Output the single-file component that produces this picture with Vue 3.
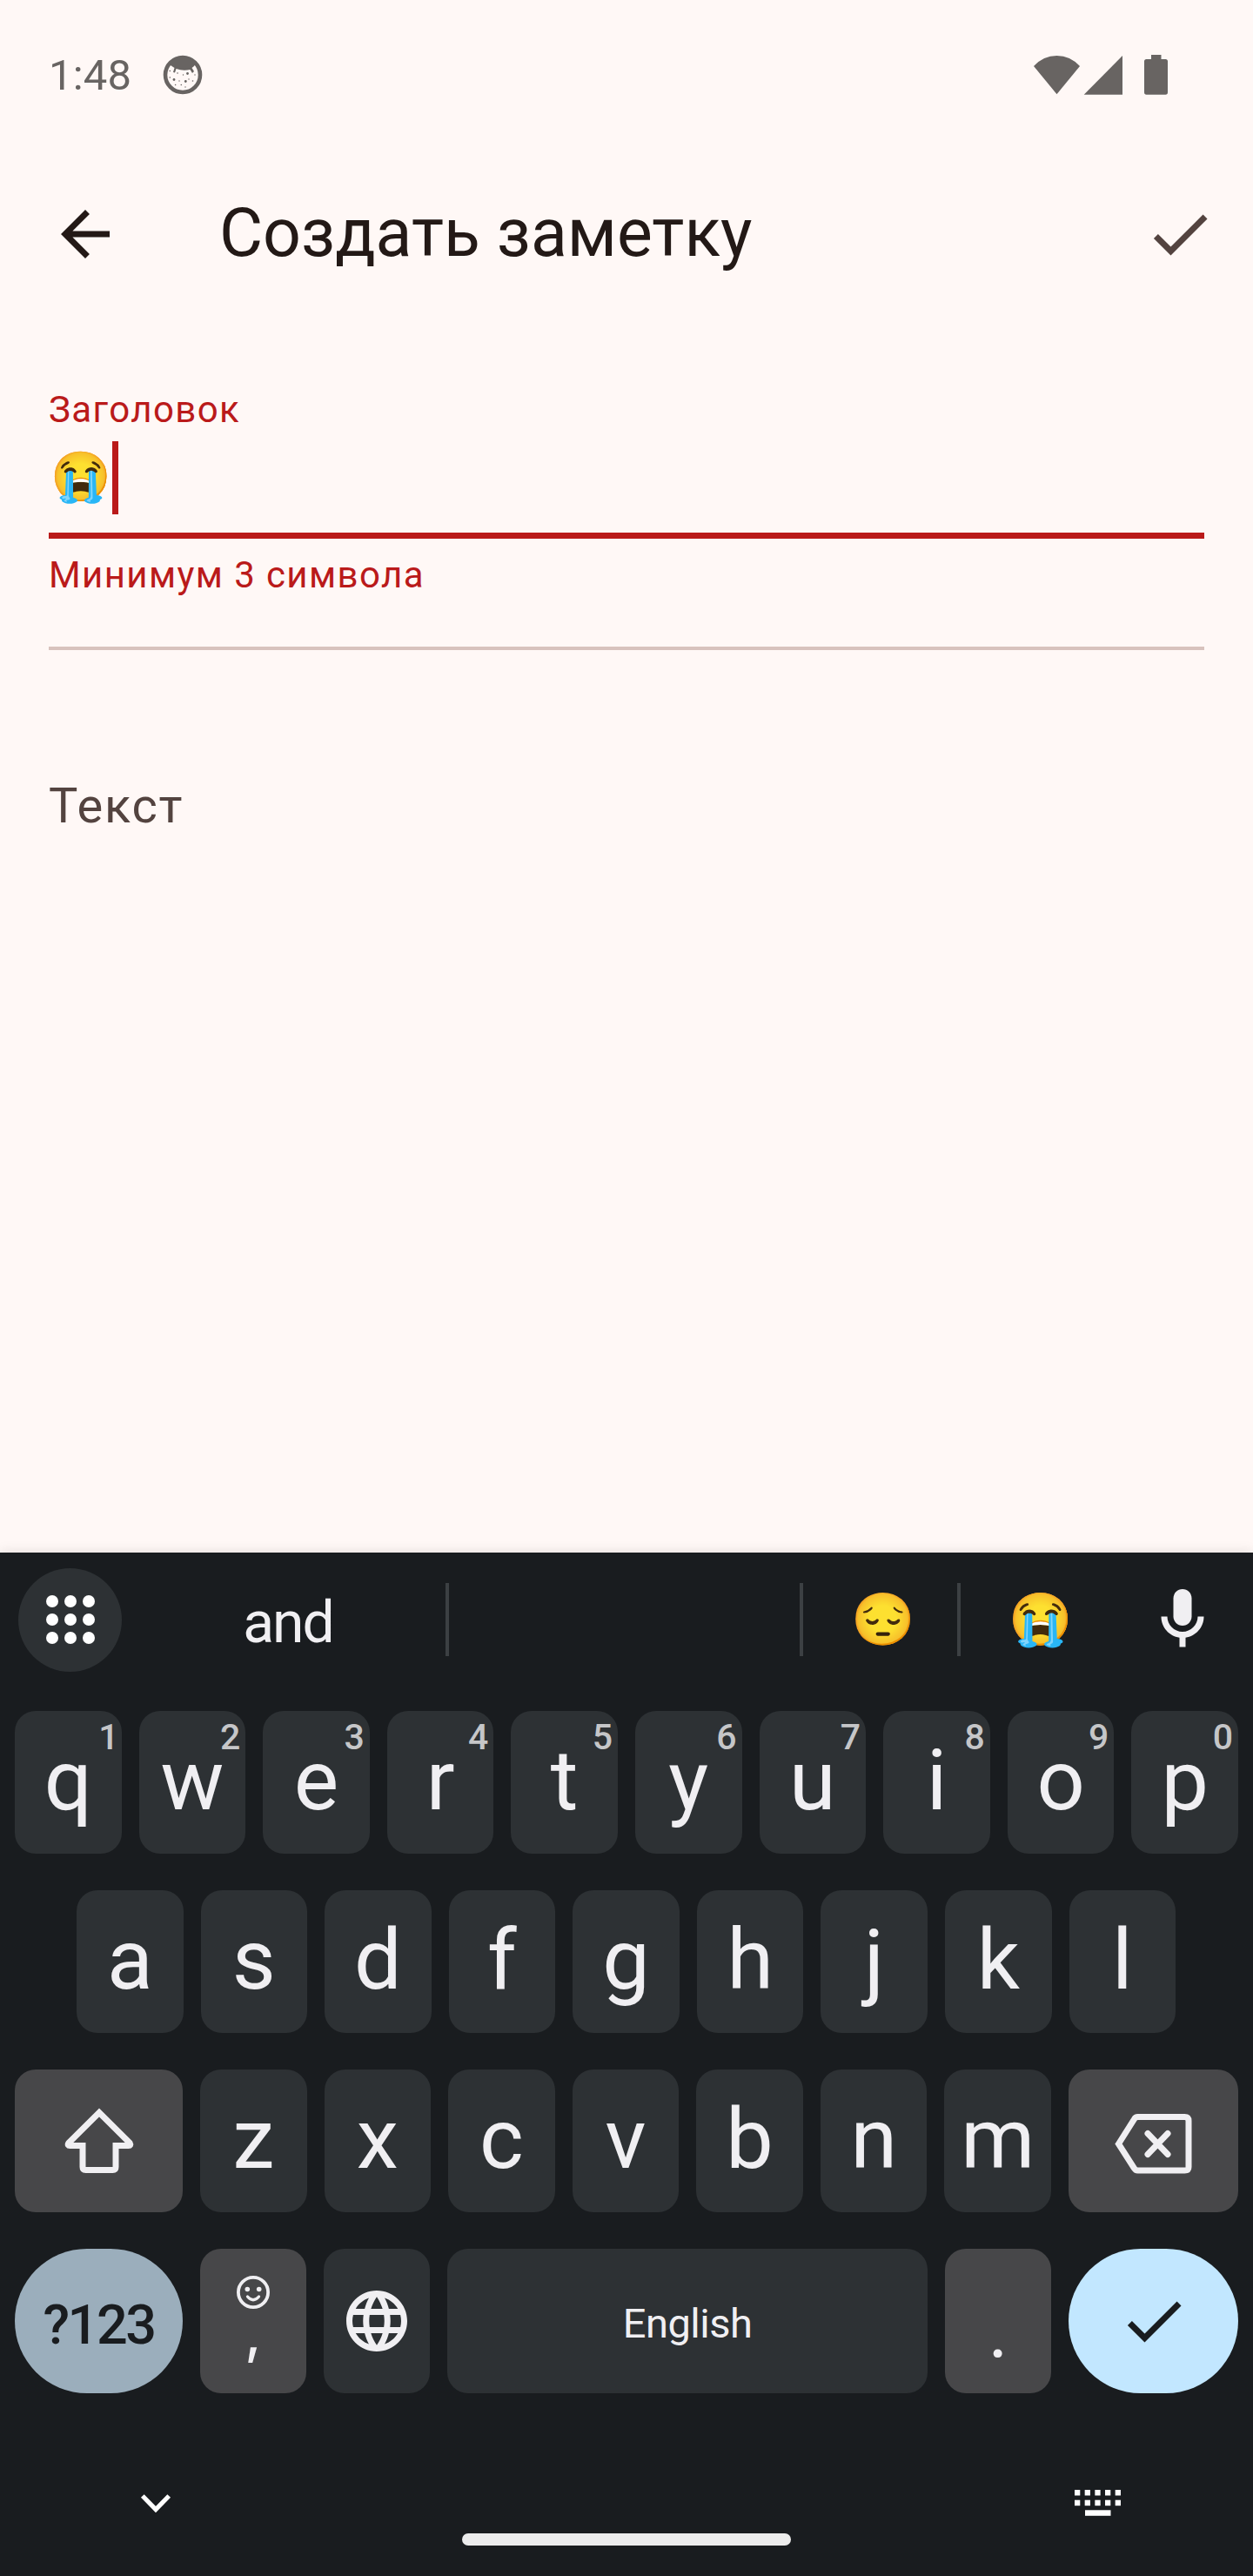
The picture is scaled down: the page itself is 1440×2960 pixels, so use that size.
<script setup>
const rowOne = [...'qwertyuiop'].map((letter, i) => ({ letter, hint: String((i + 1) % 10) }))
const rowTwo = [...'asdfghjkl']
const rowThree = [...'zxcvbnm']
const columns = [0, 1, 2, 3, 4]
const dots = [0, 1, 2, 3, 4, 5, 6, 7, 8]
</script>

<template>
  <div class="screen">
    <header class="status">
      <span class="clock">1:48</span>
      <svg class="avatar" width="46" height="46" viewBox="0 0 46 46">
        <circle cx="23" cy="23" r="20" fill="none" stroke="#686462" stroke-width="4.6" />
        <path d="M8 10Q23 -5 38 10L36 13L33.500 15L36 19L34 21L31.500 17Q23 19 15.500 16L14 20.500L12 20L13.500 15L9 12Z" fill="#686462" />
        <g fill="#686462">
          <circle cx="13" cy="28.500" r="1.400" /><circle cx="28.500" cy="21.500" r="1.400" />
          <circle cx="26.300" cy="30.500" r="1.400" /><circle cx="8.300" cy="18.500" r=".8" />
          <circle cx="8.300" cy="26" r=".8" /><circle cx="17" cy="21" r=".8" />
          <circle cx="23.500" cy="23" r=".7" /><circle cx="19" cy="30" r=".7" />
          <circle cx="14.600" cy="34.500" r=".8" /><circle cx="21.300" cy="34.500" r=".8" />
          <circle cx="26" cy="37" r=".7" /><circle cx="30" cy="28" r=".7" />
          <circle cx="34.500" cy="30" r=".8" /><circle cx="37" cy="23" r=".7" />
        </g>
      </svg>
      <svg class="signals" width="156" height="46" viewBox="0 0 156 46" fill="#686462">
        <path d="M0 13Q11 1 26.500 1T53 13L26.500 45.300Z" />
        <path d="M57.700 45.700L102 1V45.700Z" />
        <path d="M135 0H146.500V5H151.500Q154 5 154 7.500V43Q154 45.700 151.500 45.700H129.500Q127 45.700 127 43V7.500Q127 5 129.500 5H135Z" />
      </svg>
    </header>

    <nav class="appbar">
      <svg width="84" height="84" viewBox="0 0 24 24" fill="#231916"><path d="M20 11H7.830l5.590-5.590L12 4l-8 8 8 8 1.410-1.410L7.830 13H20v-2z" /></svg>
      <h1>Создать заметку</h1>
      <svg width="84" height="84" viewBox="0 0 24 24" fill="#53433f"><path d="M9 16.170L4.830 12l-1.420 1.410L9 19 21 7l-1.410-1.410z" /></svg>
    </nav>

    <main class="form">
      <label class="small">Заголовок</label>
      <div class="entry"><span class="typed">😭</span><i class="caret"></i></div>
      <p class="small error">Минимум 3 символа</p>
      <hr />
      <div class="placeholder">Текст</div>
    </main>

    <section class="keyboard">
      <div class="suggestions">
        <span class="apps"><i v-for="d in dots" :key="d"></i></span>
        <span class="word">and</span>
        <i class="bar"></i>
        <span class="blank"></span>
        <i class="bar"></i>
        <span class="emoji">😔</span>
        <i class="bar"></i>
        <span class="emoji">😭</span>
        <svg class="mic" width="84" height="84" viewBox="0 0 24 24" fill="#f0eff2"><path d="M12 14c1.660 0 3-1.340 3-3V5c0-1.660-1.340-3-3-3S9 3.340 9 5v6c0 1.660 1.340 3 3 3z" /><path d="M17 11c0 2.760-2.240 5-5 5s-5-2.240-5-5H5c0 3.530 2.610 6.430 6 6.920V21h2v-3.080c3.390-.49 6-3.390 6-6.920h-2z" /></svg>
      </div>

      <div class="row">
        <div v-for="k in rowOne" :key="k.letter" class="key"><b>{{ k.letter }}</b><sup>{{ k.hint }}</sup></div>
      </div>
      <div class="row inset">
        <div v-for="k in rowTwo" :key="k" class="key"><b>{{ k }}</b></div>
      </div>
      <div class="row">
        <div class="key wide grey">
          <svg width="84" height="84" viewBox="0 0 84 84" fill="none" stroke="#f0eff2" stroke-width="7">
            <path d="M42 9.500L6.800 44.500Q5 47.500 8.500 47.500H23V72Q23 75.500 26.500 75.500H57.500Q61 75.500 61 72V47.500H75.500Q79 47.500 77.200 44.500Z" />
          </svg>
        </div>
        <div v-for="k in rowThree" :key="k" class="key"><b>{{ k }}</b></div>
        <div class="key wide grey">
          <svg width="96" height="84" viewBox="0 0 96 84" fill="none" stroke="#f0eff2" stroke-width="7">
            <path d="M7.500 45.500L25.500 17Q27 14.500 29.500 14.500H83.500Q88 14.500 88 19V72Q88 76 83.500 76H29.500Q27 76 25.500 73.500Z" />
            <path d="M41 33.500L64 57.500M64 33.500L41 57.500" stroke-linecap="round" />
          </svg>
        </div>
      </div>
      <div class="row last">
        <div class="key wide symbols">?123</div>
        <div class="key grey comma">
          <svg width="38" height="38" viewBox="0 0 38 38" fill="none" stroke="#f0eff2" stroke-width="3.800">
            <circle cx="19" cy="19" r="17.100" />
            <path d="M12.500 24Q19 31.500 25.500 24" stroke-linecap="round" stroke-width="3.300" />
            <g fill="#f0eff2" stroke="none"><circle cx="12.300" cy="15.500" r="2.800" /><circle cx="25.700" cy="15.500" r="2.800" /></g>
          </svg>
          <span>,</span>
        </div>
        <div class="key">
          <svg width="84" height="84" viewBox="0 0 24 24" fill="#f0eff2"><path d="M11.990 2C6.470 2 2 6.480 2 12s4.470 10 9.990 10C17.520 22 22 17.520 22 12S17.520 2 11.990 2zm6.930 6h-2.950c-.32-1.250-.78-2.450-1.380-3.560 1.840.63 3.370 1.910 4.330 3.560zM12 4.040c.83 1.200 1.480 2.530 1.910 3.960h-3.820c.43-1.430 1.080-2.760 1.910-3.960zM4.260 14C4.100 13.360 4 12.690 4 12s.1-1.360.26-2h3.380c-.08.66-.14 1.320-.14 2 0 .68.06 1.340.14 2H4.260zm.82 2h2.950c.32 1.250.78 2.450 1.380 3.560-1.840-.63-3.370-1.900-4.330-3.560zm2.950-8H5.080c.96-1.660 2.490-2.930 4.330-3.560C8.810 5.550 8.350 6.750 8.030 8zM12 19.960c-.83-1.200-1.480-2.530-1.910-3.960h3.820c-.43 1.430-1.080 2.760-1.910 3.960zM14.340 14H9.660c-.09-.66-.16-1.320-.16-2 0-.68.07-1.350.16-2h4.680c.09.65.16 1.320.16 2 0 .68-.07 1.340-.16 2zm.25 5.560c.6-1.110 1.060-2.310 1.380-3.560h2.950c-.96 1.650-2.490 2.930-4.330 3.560zM16.360 14c.08-.66.14-1.320.14-2 0-.68-.06-1.340-.14-2h3.380c.16.64.26 1.310.26 2s-.1 1.360-.26 2h-3.380z" /></svg>
        </div>
        <div class="key space">English</div>
        <div class="key grey period"><span>.</span></div>
        <div class="key wide enter">
          <svg width="84" height="84" viewBox="0 0 24 24" fill="#191c1f"><path d="M9 16.170L4.830 12l-1.420 1.410L9 19 21 7l-1.410-1.410z" /></svg>
        </div>
      </div>

      <footer class="system">
        <svg class="hide" width="36" height="26" viewBox="0 0 36 26" fill="none" stroke="#fff" stroke-width="5.200"><path d="M2.800 4L18 19.500L33.200 4" /></svg>
        <span class="handle"></span>
        <svg class="switcher" width="54" height="32" viewBox="0 0 54 32" fill="#fff">
          <g v-for="c in columns" :key="c">
            <rect :x="c * 11.67" y="0" width="6.300" height="6.500" />
            <rect :x="c * 11.67" y="11.700" width="6.300" height="6.500" />
          </g>
          <rect x="12" y="23.300" width="29.500" height="6.500" />
        </svg>
      </footer>
    </section>
  </div>
</template>

<style>
body { margin: 0; background: #fff8f6; }
</style>

<style scoped>
* { box-sizing: border-box; }
.screen { width: 1440px; height: 2960px; display: flex; flex-direction: column; background: #fff8f6; font-family: Roboto, sans-serif; overflow: hidden; }
.screen svg { display: block; flex: none; }
.status { height: 171px; padding: 0 96px 0 56px; display: flex; align-items: center; }
.clock { width: 131px; padding-top: 3px; font-size: 49px; line-height: 60px; letter-spacing: .2px; color: #686462; }
.signals { margin-left: auto; }
.appbar { height: 196px; padding: 0 42px 0 56px; display: flex; align-items: center; }
.appbar h1 { flex: 1; margin: 0 0 0 112px; padding-bottom: 2px; font-size: 77px; line-height: 92px; font-weight: 400; color: #231916; }
.form { flex: 1; padding: 76px 56px 0; display: flex; flex-direction: column; }
.small { margin: 0; font-size: 42px; line-height: 56px; letter-spacing: 1.400px; color: #ba1a1a; }
.entry { height: 120px; padding-bottom: 21px; display: flex; align-items: flex-end; border-bottom: 7px solid #ba1a1a; }
.typed { width: 73px; padding: 0 0 1px 2px; font-size: 56px; line-height: 84px; }
.caret { width: 7px; height: 84px; background: #ba1a1a; }
.error { margin-top: 14px; }
hr { width: 100%; height: 4px; margin: 54px 0 0; border: 0; background: #d8c2bd; }
.placeholder { margin-top: 137px; font-size: 56px; line-height: 84px; letter-spacing: 1.750px; color: #53433f; }
.keyboard { height: 1176px; flex: none; background: #191c1f; color: #f0eff2; box-shadow: 0 0 14px rgba(0, 0, 0, .12); }
.suggestions { height: 154px; margin-bottom: 28px; padding-left: 21px; display: flex; align-items: center; }
.apps { width: 119px; height: 119px; padding: 32px; border-radius: 50%; background: #2d3134; display: grid; grid-template-columns: repeat(3, 14px); grid-auto-rows: 14px; gap: 7px; align-content: center; justify-content: center; }
.apps i { border-radius: 50%; background: #fff; }
.word { width: 372px; padding: 8px 0 0 10px; text-align: center; font-size: 66px; line-height: 80px; letter-spacing: -2px; }
.bar { width: 4px; height: 84px; background: #3c4043; }
.blank { width: 403px; }
.emoji { width: 177px; padding: 0 0 1px 5px; text-align: center; font-size: 59px; line-height: 80px; }
.mic { margin-left: 36px; }
.row { height: 164px; margin-bottom: 42px; padding: 0 17px; display: flex; gap: 20px; }
.inset { padding: 0 89px 0 88px; }
.key { flex: 1 1 0; position: relative; display: flex; align-items: center; justify-content: center; border-radius: 24px; background: #2d3134; }
.key b { font-size: 97px; line-height: 112px; font-weight: 400; padding-bottom: 4px; }
.key sup { position: absolute; top: 6px; right: 6px; font-size: 41px; line-height: 48px; font-weight: 500; color: #c5c6c8; }
.row .key:first-child sup { right: 3px; }
.wide { flex: 0 0 193px; }
.wide:last-child { flex-basis: 195px; }
.grey { background: #474749; }
.last { height: 166px; margin-bottom: 0; }
.symbols { border-radius: 83px; background: #9baebc; color: #191c1f; font-size: 63px; font-weight: 500; letter-spacing: -2.500px; padding-top: 8px; }
.comma { flex-direction: column; justify-content: flex-start; padding-top: 31px; }
.comma span { font: 500 62px/62px Inter, sans-serif; margin-top: -2px; }
.space { flex: 0 0 552px; font-size: 47px; letter-spacing: -.5px; padding-top: 4px; }
.period { align-items: flex-end; }
.period span { font-size: 88px; line-height: 100px; padding-bottom: 22px; }
.enter { border-radius: 83px; background: #c2e7ff; }
.system { height: 210px; padding: 111px 151px 0 161px; display: flex; }
.hide { margin-top: 3px; }
.handle { width: 378px; height: 14px; margin: 50px auto 0 334px; border-radius: 7px; background: #ececec; }
</style>
